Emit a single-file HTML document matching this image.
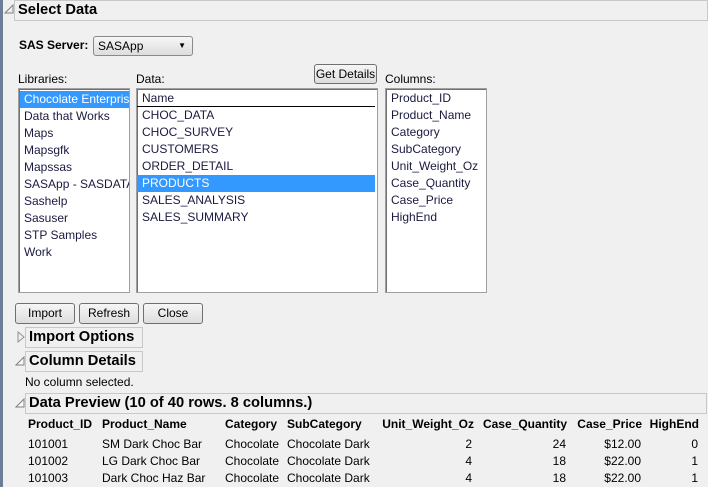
<!DOCTYPE html>
<html><head><style>
*{margin:0;padding:0;box-sizing:border-box}
body{width:708px;height:487px;background:#f0f0f0;position:relative;overflow:hidden;font-family:"Liberation Sans",sans-serif;font-size:12px;color:#000}
.a{position:absolute;white-space:nowrap}
.hdr{position:absolute;border:1px solid #c8c8c8;font-weight:bold;font-size:14.7px;padding-left:3px;line-height:19px;color:#000;background:#f0f0f0}
.list{position:absolute;background:#fff;border:1px solid #a0a0a0;box-shadow:inset 1px 1px 0 #707070}
.list div{height:17px;line-height:17px;padding-left:5px;color:#1a1a40;white-space:nowrap;overflow:hidden}
.btn{position:absolute;border:1px solid #707070;border-radius:3px;background:linear-gradient(#f6f6f6,#dddddd);text-align:center;line-height:18px;font-size:12px}
.sel{background:#3399ff;color:#fff!important}
.r{text-align:right}
</style></head><body>
<div class="a" style="left:0;top:0;width:3px;height:487px;background:#6d7d96"></div>
<svg class="a" style="left:4px;top:4px" width="10" height="10"><path d="M1 9 L9 9 L9 1 Z" fill="none" stroke="#808080"/></svg>
<div class="hdr" style="left:14px;top:0;width:694px;height:21px">Select Data</div>

<div class="a" style="left:19px;top:38px;font-weight:bold">SAS Server:</div>
<div class="btn" style="left:93px;top:36px;width:100px;height:20px;text-align:left;padding-left:4px;border-color:#8a8a8a">SASApp<span style="position:absolute;right:6px;top:0;font-size:8px">▼</span></div>

<div class="a" style="left:18px;top:72px">Libraries:</div>
<div class="a" style="left:136px;top:72px">Data:</div>
<div class="a" style="left:385px;top:72px">Columns:</div>
<div class="btn" style="left:314px;top:64px;width:63px;height:20px">Get Details</div>

<div class="list" style="left:18px;top:88px;width:112px;height:205px;padding-top:2px">
<div class="sel" style="margin-left:1px;padding-left:4px">Chocolate Enterprise</div>
<div>Data that Works</div><div>Maps</div><div>Mapsgfk</div><div>Mapssas</div><div>SASApp - SASDATA</div><div>Sashelp</div><div>Sasuser</div><div>STP Samples</div><div>Work</div>
</div>
<div class="list" style="left:136px;top:88px;width:242px;height:205px;padding-top:1px">
<div style="border-bottom:1px solid #000;margin-right:2px">Name</div>
<div>CHOC_DATA</div><div>CHOC_SURVEY</div><div>CUSTOMERS</div><div>ORDER_DETAIL</div>
<div class="sel" style="margin-right:2px">PRODUCTS</div>
<div>SALES_ANALYSIS</div><div>SALES_SUMMARY</div>
</div>
<div class="list" style="left:385px;top:88px;width:102px;height:205px;padding-top:1px">
<div>Product_ID</div><div>Product_Name</div><div>Category</div><div>SubCategory</div><div>Unit_Weight_Oz</div><div>Case_Quantity</div><div>Case_Price</div><div>HighEnd</div>
</div>

<div class="btn" style="left:15px;top:303px;width:60px;height:21px">Import</div>
<div class="btn" style="left:79px;top:303px;width:60px;height:21px">Refresh</div>
<div class="btn" style="left:143px;top:303px;width:60px;height:21px">Close</div>

<svg class="a" style="left:17px;top:331px" width="8" height="12"><path d="M1 1 L7 6 L1 11 Z" fill="none" stroke="#909090"/></svg>
<div class="hdr" style="left:25px;top:327px;width:118px;height:21px">Import Options</div>
<svg class="a" style="left:15px;top:356px" width="10" height="10"><path d="M1 9 L9 9 L9 1 Z" fill="#f8f8f8" stroke="#808080"/></svg>
<div class="hdr" style="left:25px;top:351px;width:118px;height:21px">Column Details</div>
<div class="a" style="left:25px;top:375px">No column selected.</div>
<svg class="a" style="left:15px;top:398px" width="10" height="10"><path d="M1 9 L9 9 L9 1 Z" fill="#f8f8f8" stroke="#808080"/></svg>
<div class="hdr" style="left:25px;top:393px;width:682px;height:21px">Data Preview (10 of 40 rows. 8 columns.)</div>

<div class="a" style="left:28px;top:417px;font-weight:bold">Product_ID</div>
<div class="a" style="left:102px;top:417px;font-weight:bold">Product_Name</div>
<div class="a" style="left:225px;top:417px;font-weight:bold">Category</div>
<div class="a" style="left:287px;top:417px;font-weight:bold">SubCategory</div>
<div class="a r" style="left:370px;width:104px;top:417px;font-weight:bold">Unit_Weight_Oz</div>
<div class="a r" style="left:470px;width:97px;top:417px;font-weight:bold">Case_Quantity</div>
<div class="a r" style="left:560px;width:82px;top:417px;font-weight:bold">Case_Price</div>
<div class="a r" style="left:640px;width:59px;top:417px;font-weight:bold">HighEnd</div>

<div class="a" style="left:28px;top:437px">101001</div><div class="a" style="left:102px;top:437px">SM Dark Choc Bar</div><div class="a" style="left:225px;top:437px">Chocolate</div><div class="a" style="left:287px;top:437px">Chocolate Dark</div>
<div class="a r" style="left:400px;width:72px;top:437px">2</div><div class="a r" style="left:500px;width:66px;top:437px">24</div><div class="a r" style="left:560px;width:81px;top:437px">$12.00</div><div class="a r" style="left:640px;width:58px;top:437px">0</div>

<div class="a" style="left:28px;top:454px">101002</div><div class="a" style="left:102px;top:454px">LG Dark Choc Bar</div><div class="a" style="left:225px;top:454px">Chocolate</div><div class="a" style="left:287px;top:454px">Chocolate Dark</div>
<div class="a r" style="left:400px;width:72px;top:454px">4</div><div class="a r" style="left:500px;width:66px;top:454px">18</div><div class="a r" style="left:560px;width:81px;top:454px">$22.00</div><div class="a r" style="left:640px;width:58px;top:454px">1</div>

<div class="a" style="left:28px;top:471px">101003</div><div class="a" style="left:102px;top:471px">Dark Choc Haz Bar</div><div class="a" style="left:225px;top:471px">Chocolate</div><div class="a" style="left:287px;top:471px">Chocolate Dark</div>
<div class="a r" style="left:400px;width:72px;top:471px">4</div><div class="a r" style="left:500px;width:66px;top:471px">18</div><div class="a r" style="left:560px;width:81px;top:471px">$22.00</div><div class="a r" style="left:640px;width:58px;top:471px">1</div>
</body></html>
